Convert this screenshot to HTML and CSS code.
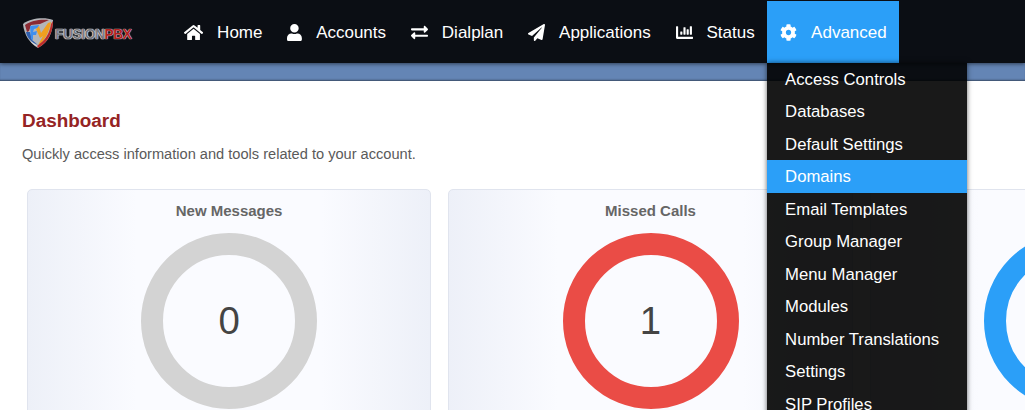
FILE: index.html
```html
<!DOCTYPE html>
<html lang="en">
<head>
<meta charset="utf-8">
<title>Dashboard</title>
<link rel="stylesheet" href="styles.css">
</head>
<body>
<header class="navbar">
  <a class="brand">
    <svg class="shield" viewBox="0 0 30 30" width="30" height="30">
      <path d="M0 6 C7 0 22 -1 30 2 C30 14 26 24 15 30 C6 25 1 16 0 6Z" fill="#b4b6ba"/>
      <path d="M2 7 C8 2 19 1 26 2 L17 6 L8 7 L6 13 L4 14Z" fill="#8c2a33"/>
      <path d="M3 14 L7 14 L9 22 L15 27 C9 25 4 20 3 14Z" fill="#2f5fae"/>
      <path d="M7 8 L16 7 L15 10 L11 11 L10 14 L14 13 L13 17 L10 17 L10 22 L8 21Z" fill="#3f8ff0"/>
      <path d="M16 8 L18 15 L25 5 L28 4 C26 15 21 24 15 27 L20 18 L17 20 L13 11Z" fill="#f0a020"/>
      <path d="M20 23 C24 19 27 13 28 6 L30 3 C30 13 26 24 15 30 L14 28Z" fill="#bd2c2a"/>
      <path d="M7 23 L13 27 L15 29 C11 27 9 25 7 23Z" fill="#e8e8e8"/>
    </svg>
    <span class="brand-name">FUSION<span class="brand-pbx">PBX</span></span>
  </a>
  <nav class="menu">
    <a class="item">
      <svg class="icon" viewBox="0 0 576 512"><path d="M280.37 148.26L96 300.11V464a16 16 0 0 0 16 16l112.06-.29a16 16 0 0 0 15.92-16V368a16 16 0 0 1 16-16h64a16 16 0 0 1 16 16v95.64a16 16 0 0 0 16 16.05L464 480a16 16 0 0 0 16-16V300L295.67 148.26a12.19 12.19 0 0 0-15.3 0zM571.6 251.47L488 182.56V44.05a12 12 0 0 0-12-12h-56a12 12 0 0 0-12 12v72.61L318.47 43a48 48 0 0 0-61 0L4.34 251.47a12 12 0 0 0-1.6 16.9l25.5 31A12 12 0 0 0 45.15 301l235.22-193.74a12.19 12.19 0 0 1 15.3 0L530.9 301a12 12 0 0 0 16.9-1.6l25.5-31a12 12 0 0 0-1.7-16.93z"/></svg>
      <span class="label">Home</span>
    </a>
    <a class="item">
      <svg class="icon" viewBox="0 0 448 512"><path d="M224 256c70.7 0 128-57.3 128-128S294.7 0 224 0 96 57.3 96 128s57.3 128 128 128zm89.6 32h-16.7c-22.2 10.2-46.9 16-72.9 16s-50.6-5.8-72.9-16h-16.7C60.2 288 0 348.2 0 422.4V464c0 26.5 21.5 48 48 48h352c26.5 0 48-21.5 48-48v-41.6c0-74.2-60.2-134.4-134.4-134.4z"/></svg>
      <span class="label">Accounts</span>
    </a>
    <a class="item">
      <svg class="icon" viewBox="0 0 512 512"><path d="M0 168v-16c0-13.255 10.745-24 24-24h360V80c0-21.367 25.899-32.042 40.971-16.971l80 80c9.372 9.373 9.372 24.569 0 33.941l-80 80C409.956 271.982 384 261.456 384 240v-48H24c-13.255 0-24-10.745-24-24zm488 152H128v-48c0-21.314-25.862-32.08-40.971-16.971l-80 80c-9.372 9.373-9.372 24.569 0 33.941l80 80C102.057 463.997 128 453.437 128 432v-48h360c13.255 0 24-10.745 24-24v-16c0-13.255-10.745-24-24-24z"/></svg>
      <span class="label">Dialplan</span>
    </a>
    <a class="item">
      <svg class="icon" viewBox="0 0 512 512"><path d="M476 3.2L12.5 270.6c-18.1 10.4-15.8 35.6 2.2 43.2L121 358.4l287.3-253.2c5.5-4.9 13.3 2.6 8.6 8.3L176 407v80.5c0 23.6 28.5 32.9 42.5 15.8L282 426l124.6 52.2c14.2 6 30.4-2.9 33-18.2l72-432C515 7.8 493.3-6.8 476 3.2z"/></svg>
      <span class="label">Applications</span>
    </a>
    <a class="item">
      <svg class="icon" viewBox="0 0 512 512"><path d="M332.8 320h38.4c6.4 0 12.8-6.4 12.8-12.8V172.8c0-6.4-6.4-12.8-12.8-12.8h-38.4c-6.4 0-12.8 6.4-12.8 12.8v134.4c0 6.4 6.4 12.8 12.8 12.8zm96 0h38.4c6.4 0 12.8-6.4 12.8-12.8V76.8c0-6.4-6.4-12.8-12.8-12.8h-38.4c-6.4 0-12.8 6.4-12.8 12.8v230.4c0 6.4 6.4 12.8 12.8 12.8zm-288 0h38.4c6.4 0 12.8-6.4 12.8-12.8v-70.4c0-6.4-6.4-12.8-12.8-12.8h-38.4c-6.4 0-12.8 6.4-12.8 12.8v70.4c0 6.4 6.4 12.8 12.8 12.8zm96 0h38.4c6.4 0 12.8-6.4 12.8-12.8V108.8c0-6.4-6.4-12.8-12.8-12.8h-38.4c-6.4 0-12.8 6.4-12.8 12.8v198.4c0 6.4 6.4 12.8 12.8 12.8zM496 384H64V80c0-8.84-7.16-16-16-16H16C7.16 64 0 71.16 0 80v336c0 17.67 14.33 32 32 32h464c8.84 0 16-7.16 16-16v-32c0-8.84-7.16-16-16-16z"/></svg>
      <span class="label">Status</span>
    </a>
    <div class="item item-open">
      <svg class="icon" viewBox="0 0 512 512"><path d="M487.4 315.7l-42.6-24.6c4.3-23.2 4.3-47 0-70.2l42.6-24.6c4.9-2.8 7.1-8.6 5.5-14-11.1-35.6-30-67.8-54.7-94.6-3.8-4.1-10-5.1-14.8-2.3L380.8 110c-17.9-15.4-38.5-27.3-60.8-35.1V25.8c0-5.6-3.9-10.5-9.4-11.7-36.7-8.2-74.3-7.8-109.2 0-5.5 1.2-9.4 6.1-9.4 11.7V75c-22.2 7.9-42.8 19.8-60.8 35.1L88.7 85.5c-4.9-2.8-11-1.9-14.8 2.3-24.7 26.7-43.6 58.9-54.7 94.6-1.7 5.4.6 11.2 5.5 14L67.3 221c-4.3 23.2-4.3 47 0 70.2l-42.6 24.6c-4.9 2.8-7.1 8.6-5.5 14 11.1 35.6 30 67.8 54.7 94.6 3.8 4.1 10 5.1 14.8 2.3l42.6-24.6c17.9 15.4 38.5 27.3 60.8 35.1v49.2c0 5.6 3.9 10.5 9.4 11.7 36.7 8.2 74.3 7.8 109.2 0 5.5-1.2 9.4-6.1 9.4-11.7v-49.2c22.2-7.9 42.8-19.8 60.8-35.1l42.6 24.6c4.9 2.8 11 1.9 14.8-2.3 24.7-26.7 43.6-58.9 54.7-94.6 1.5-5.5-.7-11.3-5.6-14.1zM256 336c-44.1 0-80-35.9-80-80s35.9-80 80-80 80 35.9 80 80-35.9 80-80 80z"/></svg>
      <span class="label">Advanced</span>
      <ul class="dropdown">
        <li class="drop-item">Access Controls</li>
        <li class="drop-item">Databases</li>
        <li class="drop-item">Default Settings</li>
        <li class="drop-item drop-active">Domains</li>
        <li class="drop-item">Email Templates</li>
        <li class="drop-item">Group Manager</li>
        <li class="drop-item">Menu Manager</li>
        <li class="drop-item">Modules</li>
        <li class="drop-item">Number Translations</li>
        <li class="drop-item">Settings</li>
        <li class="drop-item">SIP Profiles</li>
      </ul>
    </div>
  </nav>
</header>
<div class="band"></div>
<main class="content">
  <h1 class="title">Dashboard</h1>
  <p class="subtitle">Quickly access information and tools related to your account.</p>
  <section class="cards">
    <article class="card">
      <h2 class="card-title">New Messages</h2>
      <div class="donut donut-grey"><span>0</span></div>
    </article>
    <article class="card">
      <h2 class="card-title">Missed Calls</h2>
      <div class="donut donut-red"><span>1</span></div>
    </article>
    <article class="card">
      <h2 class="card-title">Recent Calls</h2>
      <div class="donut donut-blue"><span>3</span></div>
    </article>
  </section>
</main>
</body>
</html>
```
FILE: styles.css
```css
* { box-sizing: border-box; }
html, body { margin: 0; padding: 0; height: 100%; overflow: hidden; }
body { font-family: "Liberation Sans", Arial, sans-serif; background: #fff; color: #444; }

.navbar {
  position: relative;
  z-index: 3;
  display: flex;
  align-items: center;
  height: 63px;
  padding-top: 1px;
  background: #0b0e14;
  box-shadow: 0 1px 4px rgba(0, 0, 0, .55);
}
.brand {
  display: flex;
  align-items: center;
  gap: 2px;
  width: 171.6px;
  padding-left: 23px;
}
.shield { flex: none; margin-top: 2px; }
.brand-name {
  font-size: 13.8px;
  font-weight: 700;
  font-variant: small-caps;
  letter-spacing: -0.45px;
  color: #77797e;
  margin-top: 4px;
  text-shadow: 0 0 1px #fff, 0 0 1px #fff, 0 0 1px #fff;
}
.brand-pbx { color: #b0211f; text-shadow: 0 0 1px #eee, 0 0 1px #eee; }

.menu { display: flex; height: 62px; }
.item {
  position: relative;
  display: flex;
  align-items: center;
  gap: 14px;
  padding: 0 12.4px;
  color: #fff;
  font-size: 17px;
}
.label { padding-top: 1px; }
.item-open { background: #2b9ff8; padding: 0 12.6px 0 13px; }
.icon { height: 17px; fill: #fff; flex: none; }

.dropdown {
  position: absolute;
  top: 100%;
  left: 0;
  width: 200px;
  margin: -0.2px 0 0;
  padding: 0;
  list-style: none;
  background: rgba(0, 0, 0, .9);
  box-shadow: 0 0 5px rgba(0, 0, 0, .6);
  font-size: 16.7px;
}
.drop-item { height: 32.5px; line-height: 33.4px; padding-left: 18px; color: #fff; white-space: nowrap; }
.drop-active { background: #2b9ff8; }

.band {
  height: 18px;
  background: #6485b5;
  box-shadow: inset 0 -2px 2px -1px rgba(0, 0, 0, .45);
}

.content { padding: 0 22px; }
.title { margin: 29px 0 0; font-size: 18.9px; line-height: 22px; font-weight: 700; color: #952424; }
.subtitle { margin: 12px 0 0; font-size: 14.62px; line-height: 20px; color: #5a5a5a; }

.cards { display: flex; gap: 17.25px; margin: 25px 0 0 5px; width: 1300px; }
.card {
  flex: none;
  width: 404.2px;
  height: 300px;
  padding-top: 12px;
  text-align: center;
  border: 1px solid #e0e4ee;
  border-radius: 5px;
  background: linear-gradient(to right, #edf0f8, #fafbff 27%, #fafbff 73%, #edf0f8);
}
.card-title { margin: 0; font-size: 15px; line-height: 17px; font-weight: 700; color: #666; }
.donut {
  display: flex;
  align-items: center;
  justify-content: center;
  width: 176px;
  height: 176px;
  margin: 14px auto 0;
  border-radius: 50%;
  border: 22px solid;
  font-size: 38.4px;
  color: #444;
}
.donut-grey { border-color: #d3d3d3; }
.donut-red { border-color: #ea4c46; }
.donut-blue { border-color: #2b9ff8; }
```
